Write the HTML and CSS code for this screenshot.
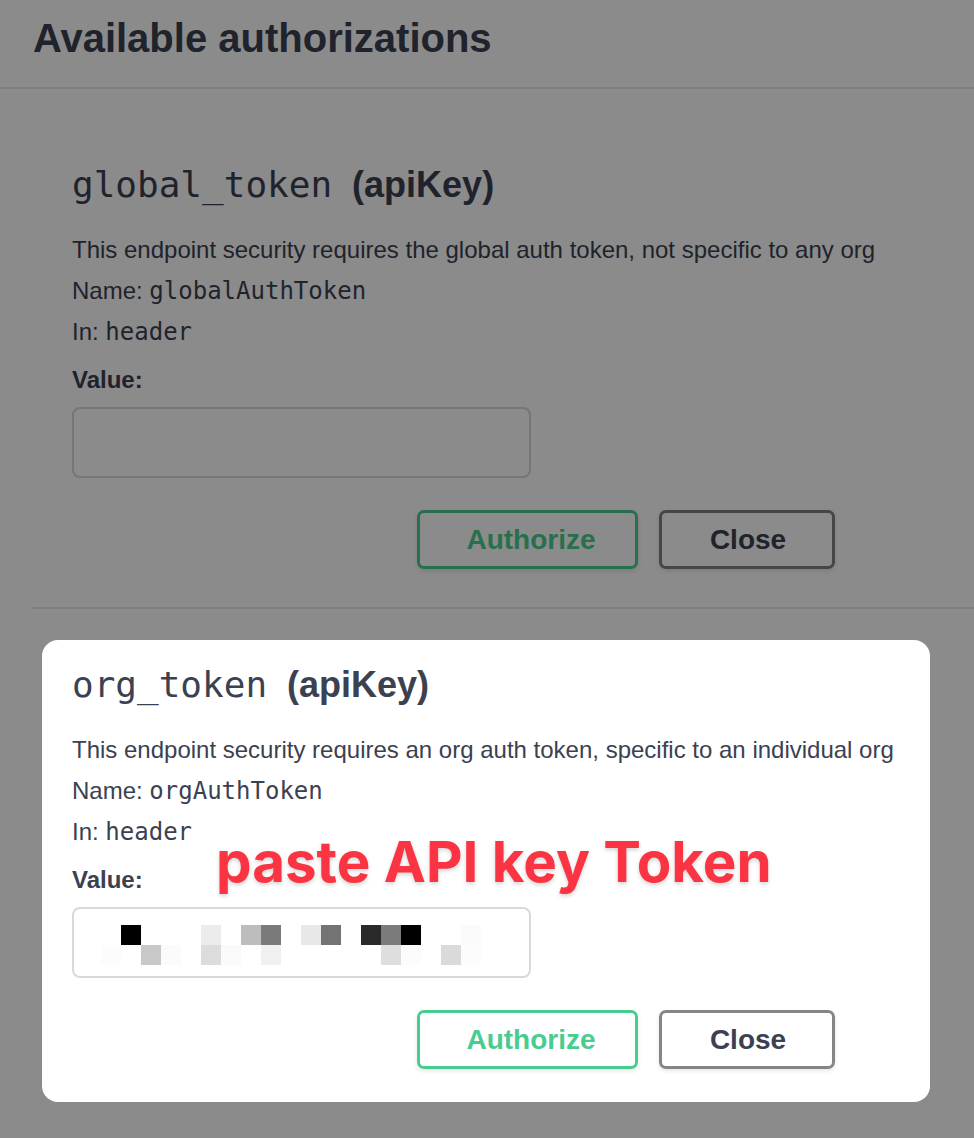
FILE: index.html
```html
<!DOCTYPE html>
<html lang="en">
<head>
<meta charset="utf-8">
<title>Available authorizations</title>
<link rel="stylesheet" href="styles.css">
</head>
<body>
<div class="modal">
  <div class="modal-header">
    <h3 class="modal-title">Available authorizations</h3>
  </div>
  <div class="modal-content">
    <div class="auth-section">
      <div class="auth-box dim">
        <h4 class="auth-title"><code>global_token</code>(apiKey)</h4>
        <p class="line">This endpoint security requires the global auth token, not specific to any org</p>
        <p class="line">Name: <code>globalAuthToken</code></p>
        <p class="line">In: <code>header</code></p>
        <label class="value-label">Value:</label>
        <div class="input"></div>
        <div class="btn-row">
          <button class="btn authorize">Authorize</button>
          <button class="btn close">Close</button>
        </div>
      </div>
    </div>
    <div class="auth-section">
      <div class="auth-box spot">
        <h4 class="auth-title"><code>org_token</code>(apiKey)</h4>
        <p class="line">This endpoint security requires an org auth token, specific to an individual org</p>
        <p class="line">Name: <code>orgAuthToken</code></p>
        <p class="line">In: <code>header</code></p>
        <label class="value-label">Value:</label>
        <div class="input">
          <svg class="mosaic" width="380" height="40" viewBox="0 0 380 40" shape-rendering="crispEdges">
            <rect x="20" y="0" width="20" height="20" fill="#000000"/>
            <rect x="100" y="0" width="20" height="20" fill="#ececec"/>
            <rect x="140" y="0" width="20" height="20" fill="#bdbdbd"/>
            <rect x="160" y="0" width="20" height="20" fill="#7a7a7a"/>
            <rect x="200" y="0" width="20" height="20" fill="#e8e8e8"/>
            <rect x="220" y="0" width="20" height="20" fill="#737373"/>
            <rect x="260" y="0" width="20" height="20" fill="#2a2a2a"/>
            <rect x="280" y="0" width="20" height="20" fill="#7b7b7b"/>
            <rect x="300" y="0" width="20" height="20" fill="#000000"/>
            <rect x="360" y="0" width="20" height="20" fill="#fbfbfb"/>
            <rect x="0" y="20" width="20" height="20" fill="#fcfcfc"/>
            <rect x="40" y="20" width="20" height="20" fill="#c8c8c8"/>
            <rect x="60" y="20" width="20" height="20" fill="#fbfbfb"/>
            <rect x="100" y="20" width="20" height="20" fill="#dcdcdc"/>
            <rect x="120" y="20" width="20" height="20" fill="#fafafa"/>
            <rect x="160" y="20" width="20" height="20" fill="#f0f0f0"/>
            <rect x="280" y="20" width="20" height="20" fill="#dedede"/>
            <rect x="300" y="20" width="20" height="20" fill="#fcfcfc"/>
            <rect x="340" y="20" width="20" height="20" fill="#dadada"/>
            <rect x="360" y="20" width="20" height="20" fill="#fcfcfc"/>
          </svg>
        </div>
        <div class="btn-row">
          <button class="btn authorize">Authorize</button>
          <button class="btn close">Close</button>
        </div>
        <div class="annotation">paste API key Token</div>
      </div>
    </div>
  </div>
</div>
</body>
</html>
```
FILE: styles.css
```css
* {
  box-sizing: border-box;
}

html,
body {
  margin: 0;
  padding: 0;
}

body {
  width: 974px;
  height: 1138px;
  overflow: hidden;
  background: #8b8b8b;
  font-family: "Liberation Sans", Arial, Helvetica, sans-serif;
}

.modal-header {
  height: 89px;
  padding: 14px 0 0 33px;
  border-bottom: 2px solid #7f7f7f;
}

.modal-title {
  margin: 0;
  font-size: 40px;
  line-height: 48px;
  font-weight: 700;
  color: #20232c;
}

.modal-content {
  padding: 20px 0 0 32px;
}

.auth-section {
  padding: 31px 0 5px 10px;
  border-bottom: 2px solid #7f7f7f;
}

.auth-section:last-child {
  border-bottom: 0;
}

.auth-box {
  position: relative;
  width: 888px;
  padding: 23px 30px 33px;
  border-radius: 16px;
}

.auth-title {
  margin: 0 0 22px;
  font-size: 36px;
  line-height: 44px;
  font-weight: 700;
}

.auth-title code {
  font-family: "DejaVu Sans Mono", "Liberation Mono", monospace;
  font-weight: 400;
  margin-right: 20px;
}

.line {
  margin: 0;
  font-size: 24px;
  line-height: 41px;
}

.line code {
  font-family: "DejaVu Sans Mono", "Liberation Mono", monospace;
  font-size: 24px;
  line-height: 1;
}

.value-label {
  display: block;
  margin-top: 7px;
  font-size: 24px;
  line-height: 41px;
  font-weight: 700;
}

.input {
  width: 459px;
  height: 71px;
  margin-top: 7px;
  padding: 16px 0 0 27px;
  border: 2px solid;
  border-radius: 8px;
}

.mosaic {
  display: block;
}

.btn-row {
  display: flex;
  gap: 21px;
  margin-top: 32px;
  padding-left: 345px;
}

.btn {
  height: 59px;
  padding: 0;
  border: 3px solid;
  border-radius: 7px;
  background: transparent;
  font-family: "Liberation Sans", Arial, Helvetica, sans-serif;
  font-size: 28px;
  font-weight: 700;
  box-shadow: 0 2px 4px rgba(0, 0, 0, 0.1);
}

.btn.authorize {
  width: 221px;
  padding-left: 7px;
}

.btn.close {
  width: 176px;
  padding-left: 2px;
}

/* dimmed (under overlay) */
.dim {
  color: #20232c;
}

.dim .input {
  border-color: #767676;
}

.dim .authorize {
  color: #286f4e;
  border-color: #286f4e;
}

.dim .close {
  color: #20232c;
  border-color: #464646;
}

/* highlighted card */
.spot {
  background: #ffffff;
  color: #3b4151;
}

.spot .input {
  border-color: #d9d9d9;
}

.spot .authorize {
  color: #49cc90;
  border-color: #49cc90;
}

.spot .close {
  color: #3b4151;
  border-color: #858585;
}

.annotation {
  position: absolute;
  left: 174px;
  top: 194px;
  font-family: Inter, "Liberation Sans", sans-serif;
  font-size: 56.5px;
  line-height: 56px;
  font-weight: 700;
  color: #fa3443;
  white-space: nowrap;
  text-shadow: 0 2px 4px rgba(0, 0, 0, 0.18);
}
```
